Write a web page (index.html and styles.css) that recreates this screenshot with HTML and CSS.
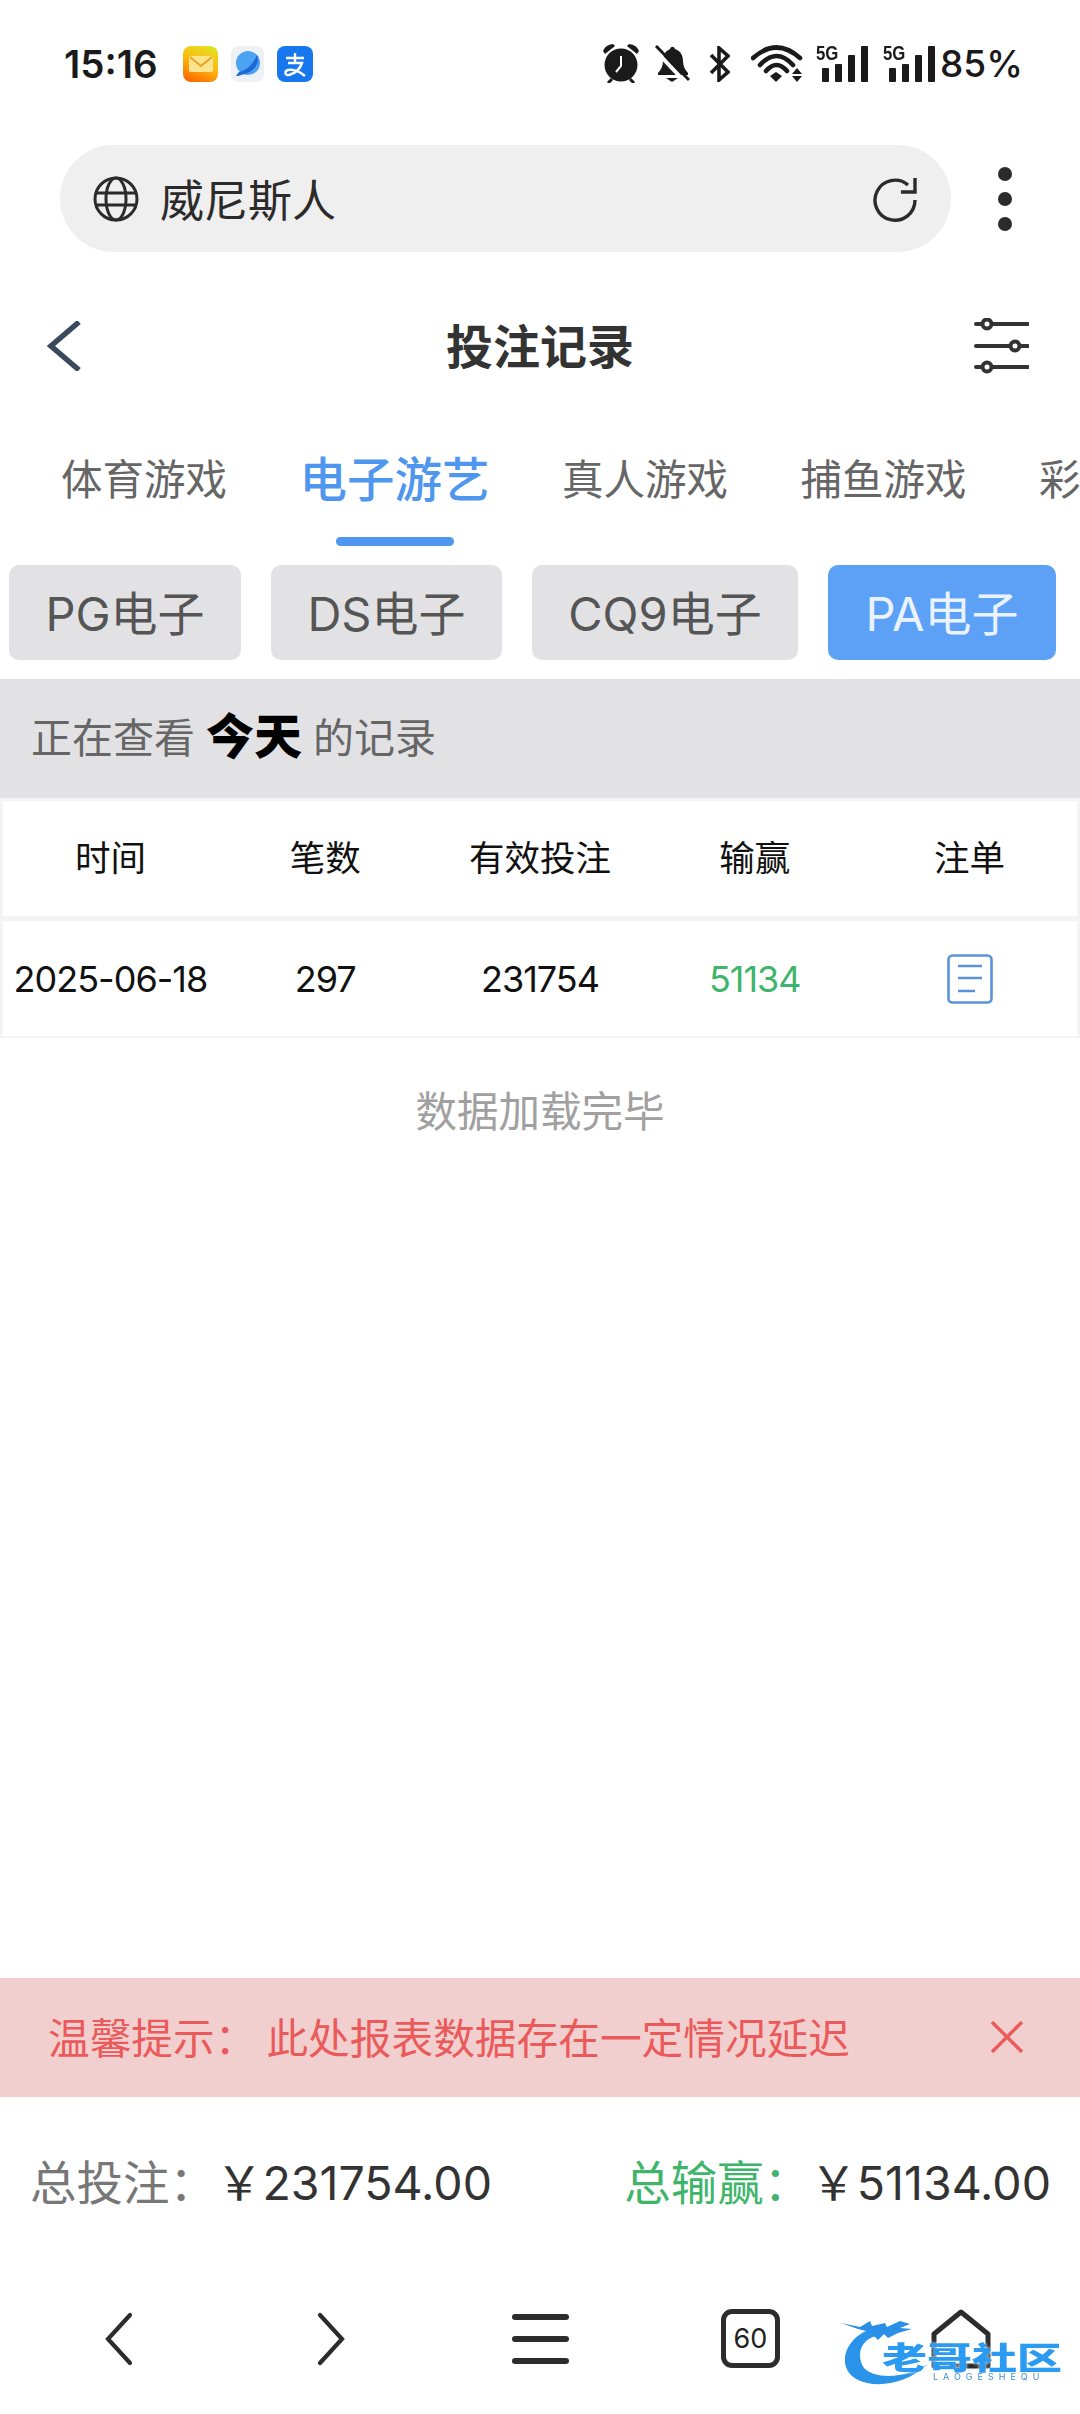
FILE: index.html
```html
<!DOCTYPE html>
<html lang="zh-CN">
<head>
    <meta charset="UTF-8">
    <title>投注记录</title>
    <link rel="stylesheet" href="styles.css">
</head>
<body>
    <div class="page">
        <div class="status-bar">
            <span class="time">15:16</span>
            <div class="apps">
                <svg class="app" width="35" height="36" viewBox="0 0 35 36"><defs><linearGradient id="mailBg" x1="0.7" y1="0" x2="0.3" y2="1"><stop offset="0" stop-color="#e4e020"/><stop offset="0.5" stop-color="#fdb810"/><stop offset="1" stop-color="#fb6a00"/></linearGradient></defs><rect width="35" height="36" rx="8" fill="url(#mailBg)"/><rect x="6" y="10" width="24" height="16" rx="1.5" fill="#fbe48e"/><path d="M7 11l11 9 11-9" fill="none" stroke="#f0a020" stroke-width="2"/></svg>
                <svg class="app" width="33" height="36" viewBox="0 0 33 36"><rect width="33" height="36" rx="8" fill="#eef1f6"/><circle cx="17" cy="17" r="12" fill="#4ba3f2"/><path d="M26 9c3 8-2 17-16 20-2 1-4 1-5 1l3-4c8-1 14-8 18-17z" fill="#1f66d6"/></svg>
                <svg class="app" width="36" height="36" viewBox="0 0 36 36"><rect width="36" height="36" rx="8" fill="#1677ee"/><path d="M9 12h18M18 7v10M11 17h14c-2 6-6 10-13 12-4 1-5-4-1-5 5-1 11 1 17 6" fill="none" stroke="#fff" stroke-width="2.4"/></svg>
            </div>
            <div class="status-right">
                <svg class="ic-alarm" width="36" height="39" viewBox="0 0 36 39"><path d="M0 7Q2 1 10 0L12 2 2 10zM36 7Q34 1 26 0L24 2 34 10z" fill="#1a1a1a"/><circle cx="18" cy="21" r="16.5" fill="#1a1a1a"/><path d="M18 12v10l-5 6" fill="none" stroke="#fff" stroke-width="2"/><path d="M9 35l-4 4M27 35l4 4" stroke="#1a1a1a" stroke-width="3"/></svg>
                <svg class="ic-bell" width="35" height="38" viewBox="0 0 35 38"><path d="M15 4c1-3 4-3 5 0 6 2 8 7 8 12 0 5 2 9 5 12v2H3v-2c3-3 5-7 5-12 0-5 2-10 7-12z" fill="#1a1a1a"/><path d="M11 33h12l-6 4z" fill="#1a1a1a"/><path d="M-1 4l33 35" stroke="#fff" stroke-width="4"/><path d="M1 1l33 34" stroke="#1a1a1a" stroke-width="3"/></svg>
                <svg class="ic-bt" width="21" height="36" viewBox="0 0 21 36"><path d="M2 9l17 17-9 8V2l9 8L2 27" fill="none" stroke="#1a1a1a" stroke-width="3.6"/></svg>
                <svg class="ic-wifi" width="53" height="38" viewBox="0 0 53 38"><path d="M2 13Q25.5-8 49 13M9 20Q25.5 2 42 20M15 26Q25.5 14 36 26" fill="none" stroke="#1a1a1a" stroke-width="4.6" stroke-linecap="round"/><path d="M19 31l6-4 6 4-6 6z" fill="#1a1a1a"/><path d="M41 29l5-6 5 6zM41 31h10l-5 6z" fill="#1a1a1a"/></svg>
                <div class="signal s1"><span class="signal-tag">5G</span><i class="bar b1"></i><i class="bar b2"></i><i class="bar b3"></i><i class="bar b4"></i></div>
                <div class="signal s2"><span class="signal-tag">5G</span><i class="bar b1"></i><i class="bar b2"></i><i class="bar b3"></i><i class="bar b4"></i></div>
                <span class="battery">85%</span>
            </div>
        </div>

        <div class="browser-row">
            <div class="address">
                <svg width="46" height="46" viewBox="0 0 46 46" fill="none" stroke="#2b2b2b" stroke-width="3"><circle cx="23" cy="23" r="21"/><ellipse cx="23" cy="23" rx="10" ry="21"/><path d="M2 17h42M2 29h42"/></svg>
                <span class="address-text">威尼斯人</span>
                <svg class="reload" width="46" height="46" viewBox="0 0 46 46" fill="none" stroke="#2b2b2b" stroke-width="3.4"><path d="M43 24a20 20 0 1 1-7-15"/><path d="M43 2v14H29"/></svg>
            </div>
            <div class="dots"><i></i><i></i><i></i></div>
        </div>

        <div class="title-row">
            <svg width="56" height="50" viewBox="0 0 56 50" fill="none" stroke="#3a4a5c" stroke-width="5.4"><path d="M32 1L4 25l28 24"/></svg>
            <h1>投注记录</h1>
            <svg width="56" height="56" viewBox="0 0 56 56" fill="none" stroke="#333" stroke-width="4" stroke-linecap="round"><path d="M3 6h52M3 28h52M3 49h52"/><circle cx="14" cy="6" r="4.5" fill="#fff"/><circle cx="42" cy="28" r="4.5" fill="#fff"/><circle cx="14" cy="49" r="4.5" fill="#fff"/></svg>
        </div>

        <div class="tabs">
            <span class="tab">体育游戏</span>
            <span class="tab active">电子游艺</span>
            <span class="tab">真人游戏</span>
            <span class="tab">捕鱼游戏</span>
            <span class="tab">彩票游戏</span>
        </div>

        <div class="sub-tabs">
            <span class="sub-tab st-pg">PG电子</span>
            <span class="sub-tab st-ds">DS电子</span>
            <span class="sub-tab st-cq">CQ9电子</span>
            <span class="sub-tab st-pa active">PA电子</span>
        </div>

        <div class="viewing">正在查看<b>今天</b>的记录</div>

        <div class="table">
            <div class="row head">
                <span>时间</span><span>笔数</span><span>有效投注</span><span>输赢</span><span>注单</span>
            </div>
            <div class="row">
                <span>2025-06-18</span><span>297</span><span>231754</span><span class="win">51134</span>
                <span><svg class="doc" width="46" height="50" viewBox="0 0 46 50" fill="none" stroke="#5b92dc" stroke-width="2.6"><rect x="1.5" y="1.5" width="43" height="47" rx="4"/><path d="M11 12h24M11 24h24M11 37h17"/></svg></span>
            </div>
        </div>

        <div class="loaded">数据加载完毕</div>

        <div class="spacer"></div>

        <div class="notice">
            <span class="notice-label">温馨提示：</span>
            <span>此处报表数据存在一定情况延迟</span>
            <svg class="notice-close" width="32" height="32" viewBox="0 0 32 32" stroke="#ec5b5b" stroke-width="3.4"><path d="M1 1l30 30M31 1L1 31"/></svg>
        </div>

        <div class="totals">
            <div><span class="total-label">总投注：</span><span class="total-value">￥231754.00</span></div>
            <div><span class="total-label green">总输赢：</span><span class="total-value">￥51134.00</span></div>
        </div>

        <div class="bottom-nav">
            <svg class="nav-left" width="32" height="54" viewBox="0 0 32 54" fill="none" stroke="#2c2c2c" stroke-width="4.2" stroke-linecap="round"><path d="M27 3L5 27l22 24"/></svg>
            <svg class="nav-right" width="32" height="54" viewBox="0 0 32 54" fill="none" stroke="#2c2c2c" stroke-width="4.2" stroke-linecap="round"><path d="M5 3l22 24L5 51"/></svg>
            <div class="nav-menu"><i></i><i></i><i></i></div>
            <div class="nav-count">60</div>
            <svg class="nav-home" width="60" height="60" viewBox="0 0 60 60" fill="none" stroke="#2c2c2c" stroke-width="5" stroke-linejoin="round"><path d="M3 25L30 3l27 22v32H3z"/></svg>
        </div>

        <div class="watermark">
            <svg width="100" height="72" viewBox="0 0 100 72"><path d="M28 12C8 20-2 42 10 56c12 14 50 16 78-10C68 60 35 62 24 50 16 38 20 22 36 18z" fill="#2a94ea"/><path d="M1 5l19 4 10-6 2 5 13-3 2 4 13-6 10 3-10 4 12 1-14 4-10 5-4-4-6 6-8-8-12-3z" fill="#2a8fe6"/></svg>
            <span class="wm-name">老哥社区</span>
            <span class="wm-sub">LAOGESHEQU</span>
        </div>
    </div>
</body>
</html>
```
FILE: styles.css
```css
* {
    box-sizing: border-box;
}
body {
    margin: 0;
    background: #fff;
    font-family: Inter, "Noto Sans CJK SC", sans-serif;
}
.page {
    position: relative;
    width: 1080px;
    height: 2414px;
    display: flex;
    flex-direction: column;
    overflow: hidden;
}

/* status bar */
.status-bar {
    height: 127px;
    flex: none;
    display: flex;
    align-items: center;
    padding: 0 57px 0 64px;
}
.time {
    font-size: 38.5px;
    font-weight: 600;
    color: #1a1a1a;
    width: 119px;
}
.apps {
    display: flex;
    align-items: center;
    gap: 13px;
}
.status-right {
    margin-left: auto;
    display: flex;
    align-items: center;
}
.ic-bell { margin-left: 16px; }
.ic-bt { margin-left: 19px; }
.ic-wifi { margin-left: 21px; }
.s1 { margin-left: 12px; }
.s2 { margin-left: 15px; }
.signal {
    position: relative;
    width: 52px;
    height: 38px;
    display: flex;
    align-items: flex-end;
    justify-content: flex-end;
    gap: 6px;
    padding-bottom: 1px;
}
.signal-tag {
    position: absolute;
    left: 0;
    top: 0;
    font-size: 21px;
    line-height: 15px;
    font-weight: 700;
    color: #1a1a1a;
    font-family: "Liberation Sans", sans-serif;
    transform: scaleX(0.8);
    transform-origin: left top;
}
.bar {
    width: 7px;
    background: #1a1a1a;
    border-radius: 1px;
}
.b1 { height: 14px; }
.b2 { height: 18px; }
.b3 { height: 27px; }
.b4 { height: 36px; }
.battery {
    font-size: 37px;
    font-weight: 500;
    color: #1a1a1a;
    margin-left: 5px;
}

/* browser address row */
.browser-row {
    height: 107px;
    margin-top: 18px;
    flex: none;
    display: flex;
    align-items: center;
    padding-left: 60px;
}
.address {
    width: 891px;
    height: 107px;
    border-radius: 54px;
    background: #efefef;
    display: flex;
    align-items: center;
    padding: 0 33px 0 33px;
}
.address-text {
    font-size: 44px;
    color: #2b2b2b;
    margin-left: 21px;
    padding-bottom: 2px;
}
.reload {
    margin-left: auto;
}
.dots {
    margin-left: 47px;
    display: flex;
    flex-direction: column;
    gap: 11px;
}
.dots i {
    width: 14px;
    height: 14px;
    border-radius: 50%;
    background: #2b2b2b;
}

/* page title */
.title-row {
    height: 188px;
    flex: none;
    display: flex;
    align-items: center;
    justify-content: space-between;
    padding: 0 51px 0 47px;
}
.title-row h1 {
    margin: 0 0 0 4px;
    padding-bottom: 6px;
    font-size: 47px;
    font-weight: 700;
    color: #333;
}

/* game tabs */
.tabs {
    height: 125px;
    flex: none;
    display: flex;
    align-items: flex-start;
    gap: 72.5px;
    padding-left: 61px;
    white-space: nowrap;
    overflow: hidden;
    padding-top: 12px;
}
.tab {
    font-size: 41.5px;
    line-height: 56px;
    color: #666;
    flex: none;
    position: relative;
}
.tab.active {
    font-size: 47.5px;
    font-weight: 500;
    color: #4f97ee;
}
.tab.active::after {
    content: "";
    position: absolute;
    left: 36px;
    bottom: -38px;
    width: 118px;
    height: 9px;
    border-radius: 5px;
    background: #4f97ee;
}

.sub-tabs {
    height: 95px;
    flex: none;
    display: flex;
    gap: 30px;
    padding-left: 9px;
}
.sub-tab {
    display: flex;
    align-items: center;
    justify-content: center;
    border-radius: 10px;
    background: #e2e2e5;
    color: #555;
    font-size: 47px;
    white-space: nowrap;
    padding-bottom: 4px;
}
.st-pg { width: 232px; }
.st-ds { width: 231px; }
.st-cq { width: 266px; }
.st-pa { width: 228px; }
.sub-tab.active {
    background: #5ca1f6;
    color: #eaf3ff;
}

.viewing {
    margin-top: 19px;
    height: 119px;
    flex: none;
    background: #e2e2e5;
    display: flex;
    align-items: center;
    padding: 0 0 8px 31px;
    font-size: 41px;
    color: #666;
}
.viewing b {
    font-size: 48px;
    font-weight: 900;
    color: #000;
    margin: -4px 11px 0 11px;
}

/* table */
.table {
    flex: none;
    border: solid #f4f4f4;
    border-width: 3px 3px 2px;
}
.row {
    display: grid;
    grid-template-columns: repeat(5, 1fr);
    align-items: center;
    height: 115px;
    text-align: center;
    font-size: 36px;
    letter-spacing: -1px;
    color: #111;
}
.row.head {
    font-size: 35.5px;
    letter-spacing: 0;
    border-bottom: 5px solid #f4f4f4;
    height: 120px;
    padding-bottom: 6px;
}
.win {
    color: #3fb56b;
}
.doc {
    display: block;
    margin: 0 auto;
}

.loaded {
    margin-top: 41px;
    flex: none;
    text-align: center;
    font-size: 41.5px;
    line-height: 66px;
    color: #a0a0a0;
}
.spacer {
    flex: 1;
}

/* red tip */
.notice {
    height: 119px;
    flex: none;
    background: #f2cfcf;
    display: flex;
    align-items: center;
    padding-left: 48px;
    padding-bottom: 3px;
    font-size: 41.7px;
    color: #ea5a5a;
    white-space: nowrap;
}
.notice-label {
    margin-right: 10px;
}
.notice-close {
    margin-left: auto;
    margin-right: 57px;
    margin-top: 2px;
}

.totals {
    height: 166px;
    flex: none;
    display: flex;
    justify-content: space-between;
    align-items: center;
    padding: 0 29px 2px 30px;
    font-size: 46.5px;
    white-space: nowrap;
}
.total-label {
    color: #777;
}
.total-label.green {
    color: #3fb56b;
}
.total-value {
    color: #333;
}

.bottom-nav {
    height: 151px;
    flex: none;
    display: flex;
    align-items: center;
}
.nav-left {
    margin-left: 103px;
}
.nav-right {
    margin-left: 180px;
}
.nav-menu {
    margin-left: 165px;
    display: flex;
    flex-direction: column;
    gap: 16px;
}
.nav-menu i {
    display: block;
    width: 57px;
    height: 6px;
    border-radius: 3px;
    background: #2c2c2c;
}
.nav-count {
    margin-left: 152px;
    width: 59px;
    height: 59px;
    border: 5px solid #2c2c2c;
    border-radius: 11px;
    display: flex;
    align-items: center;
    justify-content: center;
    font-size: 27px;
    color: #222;
}
.nav-home {
    margin-left: 151px;
}

/* site logo stamped over the bottom corner */
.watermark {
    position: absolute;
    left: 840px;
    top: 2318px;
    width: 225px;
    height: 72px;
    filter: blur(0.5px);
}
.wm-name {
    position: absolute;
    left: 42px;
    top: 14px;
    font-size: 45px;
    line-height: 52px;
    font-weight: 900;
    white-space: nowrap;
    color: #2a9bf0;
    text-shadow: 0 0 4px #fff;
    transform: scaleY(0.68);
}
.wm-sub {
    position: absolute;
    left: 93px;
    top: 54px;
    font-size: 9px;
    line-height: 10px;
    letter-spacing: 5px;
    color: #3d8ed8;
    white-space: nowrap;
}
```
